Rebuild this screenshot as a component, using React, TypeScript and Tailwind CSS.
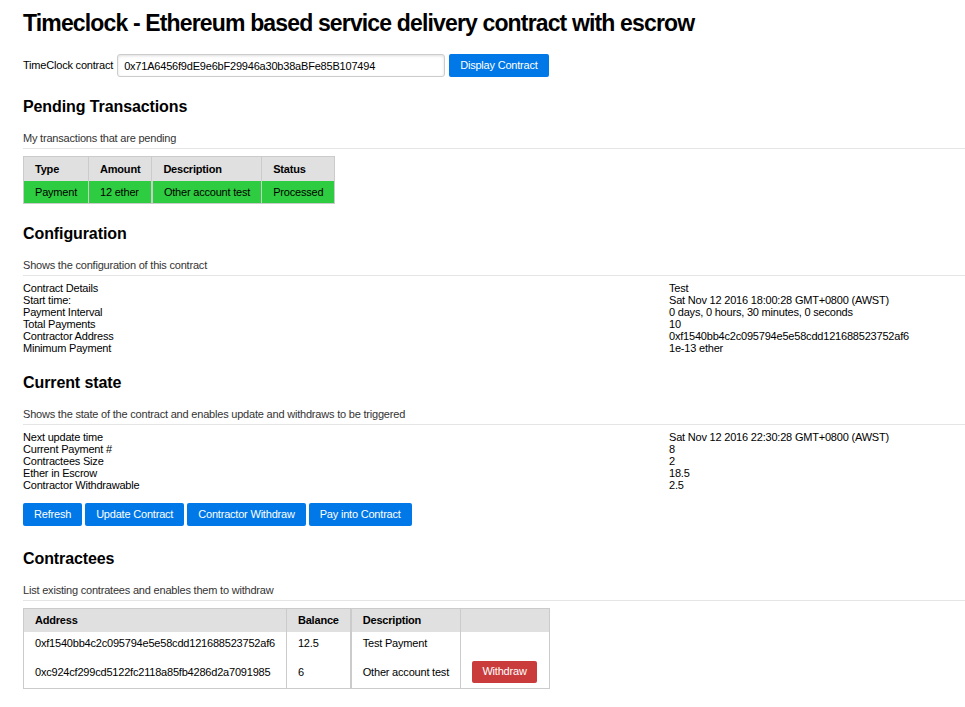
import React from "react";

const pending = [
  { type: "Payment", amount: "12 ether", description: "Other account test", status: "Processed" },
];

const config: [string, string][] = [
  ["Contract Details", "Test"],
  ["Start time:", "Sat Nov 12 2016 18:00:28 GMT+0800 (AWST)"],
  ["Payment Interval", "0 days, 0 hours, 30 minutes, 0 seconds"],
  ["Total Payments", "10"],
  ["Contractor Address", "0xf1540bb4c2c095794e5e58cdd121688523752af6"],
  ["Minimum Payment", "1e-13 ether"],
];

const state: [string, string][] = [
  ["Next update time", "Sat Nov 12 2016 22:30:28 GMT+0800 (AWST)"],
  ["Current Payment #", "8"],
  ["Contractees Size", "2"],
  ["Ether in Escrow", "18.5"],
  ["Contractor Withdrawable", "2.5"],
];

const contractees = [
  { address: "0xf1540bb4c2c095794e5e58cdd121688523752af6", balance: "12.5", description: "Test Payment", canWithdraw: false },
  { address: "0xc924cf299cd5122fc2118a85fb4286d2a7091985", balance: "6", description: "Other account test", canWithdraw: true },
];

function Section({ title, desc, children }: { title: string; desc: string; children: React.ReactNode }) {
  return (
    <section>
      <h2 className="text-[16px] leading-[20px] font-bold tracking-[-0.1px] text-black">{title}</h2>
      <p className="mt-[14px] pb-[3px] leading-[14px] text-[#333] border-b border-[#e5e5e5]">{desc}</p>
      {children}
    </section>
  );
}

function KeyValues({ rows }: { rows: [string, string][] }) {
  return (
    <div className="mt-[6px] grid grid-cols-[646px_1fr] leading-[12px] text-black">
      {rows.map(([k, v]) => (
        <React.Fragment key={k}>
          <div>{k}</div>
          <div>{v}</div>
        </React.Fragment>
      ))}
    </div>
  );
}

function BlueButton({ children }: { children: React.ReactNode }) {
  return (
    <button className="h-[23px] px-[11px] rounded-[2px] bg-[#0078e7] text-white text-[11px] tracking-[-0.2px] leading-none">
      {children}
    </button>
  );
}

export default function App() {
  return (
    <div
      className="min-h-[707px] bg-white pl-[23px] pt-[9px] pb-[20px] text-[11px] tracking-[-0.2px] text-black"
      style={{ fontFamily: '"Liberation Sans", Arial, Helvetica, sans-serif' }}
    >
      <h1 className="text-[23px] leading-[28px] font-bold tracking-[-0.85px] text-black">
        Timeclock - Ethereum based service delivery contract with escrow
      </h1>

      <div className="mt-[17px] flex items-center gap-[4px]">
        <label>TimeClock contract</label>
        <input
          defaultValue="0x71A6456f9dE9e6bF29946a30b38aBFe85B107494"
          className="w-[328px] h-[23px] px-[6px] border border-[#ccc] rounded-[3px] shadow-[inset_0_1px_3px_#ddd] text-[11px] tracking-[-0.2px] text-black outline-none"
        />
        <BlueButton>Display Contract</BlueButton>
      </div>

      <div className="mt-[20px]">
        <Section title="Pending Transactions" desc="My transactions that are pending">
          <table className="mt-[7px] border border-[#cbcbcb] border-collapse text-left">
            <thead className="bg-[#e0e0e0]">
              <tr className="h-[24px]">
                {["Type", "Amount", "Description", "Status"].map((h) => (
                  <th key={h} className="px-[11px] font-bold border-l border-[#cbcbcb]">{h}</th>
                ))}
              </tr>
            </thead>
            <tbody>
              {pending.map((p) => (
                <tr key={p.type} className="h-[23px] bg-[#2ecc40]">
                  <td className="px-[11px] border-l border-[#cbcbcb]">{p.type}</td>
                  <td className="px-[11px] border-l border-[#cbcbcb]">{p.amount}</td>
                  <td className="px-[11px] border-l-2 border-[#cbcbcb]">{p.description}</td>
                  <td className="px-[11px] border-l border-[#cbcbcb]">{p.status}</td>
                </tr>
              ))}
            </tbody>
          </table>
        </Section>
      </div>

      <div className="mt-[20px]">
        <Section title="Configuration" desc="Shows the configuration of this contract">
          <KeyValues rows={config} />
        </Section>
      </div>

      <div className="mt-[19px]">
        <Section title="Current state" desc="Shows the state of the contract and enables update and withdraws to be triggered">
          <KeyValues rows={state} />
          <div className="mt-[12px] flex gap-[3px]">
            <BlueButton>Refresh</BlueButton>
            <BlueButton>Update Contract</BlueButton>
            <BlueButton>Contractor Withdraw</BlueButton>
            <BlueButton>Pay into Contract</BlueButton>
          </div>
        </Section>
      </div>

      <div className="mt-[23px]">
        <Section title="Contractees" desc="List existing contratees and enables them to withdraw">
          <table className="mt-[7px] border border-[#cbcbcb] border-collapse text-left">
            <thead className="bg-[#e0e0e0]">
              <tr className="h-[23px]">
                <th className="px-[11px] font-bold">Address</th>
                <th className="px-[11px] font-bold border-l border-[#cbcbcb]">Balance</th>
                <th className="px-[11px] font-bold border-l-2 border-[#cbcbcb]">Description</th>
                <th className="px-[11px] w-[89px] border-l border-[#cbcbcb]"></th>
              </tr>
            </thead>
            <tbody>
              {contractees.map((c) => (
                <tr key={c.address} className={c.canWithdraw ? "h-[33px]" : "h-[24px]"}>
                  <td className="px-[11px]">{c.address}</td>
                  <td className="px-[11px] border-l border-[#cbcbcb]">{c.balance}</td>
                  <td className="px-[11px] border-l-2 border-[#cbcbcb]">{c.description}</td>
                  <td className="px-[11px] border-l border-[#cbcbcb]">
                    {c.canWithdraw && (
                      <button className="h-[22px] w-[65px] rounded-[2px] bg-[#ca3c3c] text-white text-[11px] tracking-[-0.2px] leading-none">
                        Withdraw
                      </button>
                    )}
                  </td>
                </tr>
              ))}
            </tbody>
          </table>
        </Section>
      </div>
    </div>
  );
}
